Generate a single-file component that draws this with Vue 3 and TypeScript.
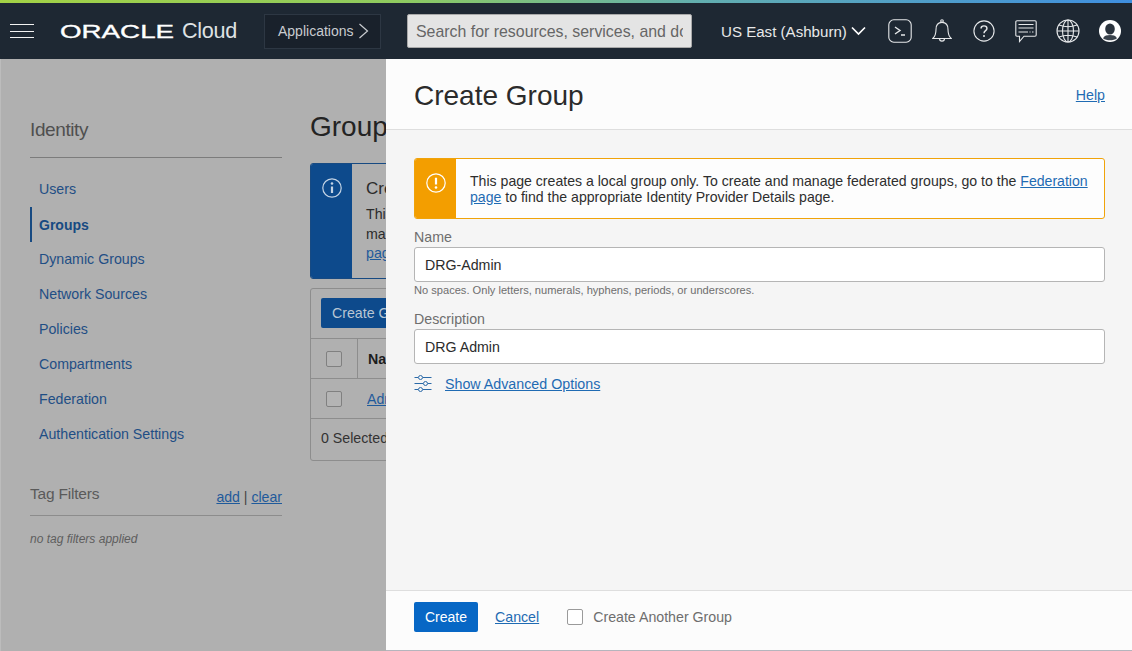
<script setup lang="ts">
const navItems: { label: string; active?: boolean }[] = [
  { label: 'Users' },
  { label: 'Groups', active: true },
  { label: 'Dynamic Groups' },
  { label: 'Network Sources' },
  { label: 'Policies' },
  { label: 'Compartments' },
  { label: 'Federation' },
  { label: 'Authentication Settings' }
]
</script>

<template>
  <div class="page">
    <div class="gradient"></div>
    <header class="topbar">
      <button class="burger" aria-label="Menu"><i></i><i></i><i></i></button>
      <div class="brand"><span class="oracle">ORACLE</span><span class="cloud">Cloud</span></div>
      <button class="apps">Applications
        <svg width="11" height="16" viewBox="0 0 11 16"><path d="M1.5 1 L9.5 8 L1.5 15" fill="none" stroke="#c9ccd0" stroke-width="1.2"/></svg>
      </button>
      <div class="search"><span>Search for resources, services, and do</span></div>
      <div class="region">US East (Ashburn)
        <svg width="15" height="10" viewBox="0 0 15 10"><path d="M1 1.5 L7.5 8 L14 1.5" fill="none" stroke="#fff" stroke-width="1.7"/></svg>
      </div>
      <div class="icons">
        <svg width="24" height="24" viewBox="0 0 24 24" fill="none" stroke="#e6e8ea" stroke-width="1.1"><rect x="0.8" y="0.8" width="22.4" height="22.4" rx="5"/><path d="M7 8 L12 11.5 L7 15 M13 16 H17" stroke-width="1.4"/></svg>
        <svg class="bell" width="20" height="24" viewBox="0 0 20 24" fill="none" stroke="#e6e8ea" stroke-width="1.1"><path d="M0.8 19.5 C3.5 17 4 14 4 10.5 C4 6 6.5 3.4 10 3.4 C13.5 3.4 16 6 16 10.5 C16 14 16.5 17 19.2 19.5 Z"/><circle cx="10" cy="2" r="1.3"/><path d="M7.5 19.5 C7.5 23 12.5 23 12.5 19.5"/></svg>
        <svg class="help" width="22" height="22" viewBox="0 0 24 24" fill="none" stroke="#e6e8ea" stroke-width="1.2"><circle cx="12" cy="12" r="11"/><path d="M8.8 9.2 C8.8 5.5 15.2 5.5 15.2 9.2 C15.2 11.8 12 11.5 12 14.5" stroke-width="1.6"/><circle cx="12" cy="17.5" r="1.1" fill="#e6e8ea" stroke="none"/></svg>
        <svg class="chat" width="22" height="23" viewBox="0 0 22 23" fill="none" stroke="#e6e8ea" stroke-width="1.1"><path d="M2 0.8 H20 Q21.2 0.8 21.2 2 V15 Q21.2 16.2 20 16.2 H9 L4.5 21.5 V16.2 H2 Q0.8 16.2 0.8 15 V2 Q0.8 0.8 2 0.8 Z"/><path d="M3.5 4.5 H18.5 M3.5 8 H18.5 M3.5 12 H13 M14.5 12 H15.5 M17 12 H18.5"/></svg>
        <svg class="globe" width="24" height="24" viewBox="0 0 24 24" fill="none" stroke="#e6e8ea" stroke-width="1.1"><circle cx="12" cy="12" r="11"/><ellipse cx="12" cy="12" rx="5.5" ry="11"/><path d="M12 1 V23 M1 12 H23 M3 6 Q12 9.5 21 6 M3 18 Q12 14.5 21 18"/></svg>
        <svg class="avatar" width="22" height="22" viewBox="0 0 22 22"><circle cx="11" cy="11" r="11" fill="#fff"/><ellipse cx="11" cy="9" rx="4.8" ry="5.6" fill="#2a333d"/><path d="M4 18.2 C5.5 15.6 8 15 11 15 C14 15 16.5 15.6 18 18.2 C14.5 21 7.5 21 4 18.2 Z" fill="#3a434c"/></svg>
      </div>
    </header>

    <div class="stage">
      <aside class="side">
        <h2 class="side-title">Identity</h2>
        <nav class="nav">
          <a v-for="item in navItems" :key="item.label" class="nav-item" :class="{ active: item.active }">{{ item.label }}</a>
        </nav>
        <div class="tag-head">
          <span class="tag-title">Tag Filters</span>
          <span class="tag-links"><a>add</a> | <a>clear</a></span>
        </div>
        <p class="tag-none">no tag filters applied</p>
      </aside>

      <main class="main">
        <h1 class="main-title">Groups</h1>
        <div class="info">
          <div class="info-icon">
            <svg width="20" height="20" viewBox="0 0 20 20" fill="none" stroke="#c3d3e4" stroke-width="1.2"><circle cx="10" cy="10" r="9.2"/><path d="M10 8.5 V15" stroke-width="2.2"/><circle cx="10" cy="5.5" r="1.3" fill="#c3d3e4" stroke="none"/></svg>
          </div>
          <div class="info-text">
            <div class="info-head">Create</div>
            <div>This</div>
            <div>manage</div>
            <a>page</a>
          </div>
        </div>
        <div class="table">
          <div class="tbar"><span class="tbtn">Create Group</span></div>
          <div class="trow thead">
            <span class="cell-check"><i class="check"></i></span>
            <span class="cell-name">Name</span>
          </div>
          <div class="trow">
            <span class="cell-check plain"><i class="check"></i></span>
            <a class="cell-link">Administrators</a>
          </div>
          <div class="tfoot">0 Selected</div>
        </div>
      </main>

      <section class="drawer">
        <div class="d-head">
          <h2>Create Group</h2>
          <a class="link">Help</a>
        </div>
        <div class="d-body">
          <div class="warn">
            <div class="warn-icon">
              <svg width="20" height="20" viewBox="0 0 20 20" fill="none" stroke="#fff" stroke-width="1.2"><circle cx="10" cy="10" r="9.2"/><path d="M10 4.8 V11.5" stroke-width="2.2"/><circle cx="10" cy="14.5" r="1.3" fill="#fff" stroke="none"/></svg>
            </div>
            <p>This page creates a local group only. To create and manage federated groups, go to the <a class="link">Federation</a> <a class="link">page</a> to find the appropriate Identity Provider Details page.</p>
          </div>
          <label class="f-label">Name</label>
          <div class="input">DRG-Admin</div>
          <div class="hint">No spaces. Only letters, numerals, hyphens, periods, or underscores.</div>
          <label class="f-label second">Description</label>
          <div class="input">DRG Admin</div>
          <div class="advanced">
            <svg width="18" height="17" viewBox="0 0 18 17" fill="none" stroke="#2c6aa8" stroke-width="1"><path d="M0.5 2.5 H4 M9 2.5 H17.5 M0.5 8.5 H9 M14 8.5 H17.5 M0.5 14.5 H4 M9 14.5 H17.5"/><circle cx="6.5" cy="2.5" r="2"/><circle cx="11.5" cy="8.5" r="2"/><circle cx="6.5" cy="14.5" r="2"/></svg>
            <a class="link">Show Advanced Options</a>
          </div>
        </div>
        <div class="d-foot">
          <button class="create">Create</button>
          <a class="link">Cancel</a>
          <i class="check light"></i>
          <span class="another">Create Another Group</span>
        </div>
      </section>
    </div>
  </div>
</template>

<style>
html, body { margin: 0; padding: 0; }
</style>

<style scoped>
.page {
  width: 1132px; height: 651px; overflow: hidden; display: flex; flex-direction: column;
  font-family: "Liberation Sans", Arial, sans-serif; font-size: 14.2px; color: #2b2b2b; background: #b0b0b0;
}
a { cursor: pointer; }
.gradient { height: 3px; flex: none; background: linear-gradient(90deg, #a3d246 0%, #8fcb5f 35%, #62aeb0 62%, #3f8fe0 100%); }
.topbar { height: 56px; flex: none; background: #1e2833; display: flex; align-items: center; color: #fff; }
.burger { width: 24px; margin-left: 10px; padding: 0; height: 14px; border: 0; background: none; display: flex; flex-direction: column; justify-content: space-between; }
.burger i { display: block; height: 1px; background: #f2f2f2; }
.brand { margin-left: 26px; display: flex; align-items: baseline; width: 178px; }
.oracle { font-size: 19px; font-weight: 400; display: inline-block; transform: scaleX(1.46); transform-origin: left center; width: 122px; -webkit-text-stroke: 0.35px #fff; }
.cloud { font-size: 21.6px; color: #dfe2e4; letter-spacing: -0.3px; }
.apps { margin-left: 26px; width: 117px; height: 35px; box-sizing: border-box; background: #19212b; border: 1px solid #2d3743; display: flex; align-items: center; gap: 4px; color: #c9ccd0; font: 14px "Liberation Sans", Arial, sans-serif; padding: 0 0 0 13px; }
.search { margin-left: 26px; width: 285px; height: 34px; box-sizing: border-box; background: #e4e4e4; border: 1px solid #a9a9a9; border-radius: 2px; padding: 1px 8px 0; display: flex; align-items: center; overflow: hidden; color: #666; white-space: nowrap; font-size: 15.9px; }
.search span { display: block; width: 272px; overflow: hidden; }
.region { margin-left: 29px; font-size: 15.1px; color: #e8e9ea; display: flex; align-items: center; gap: 4px; white-space: nowrap; }
.icons { margin-left: 22px; display: flex; align-items: center; gap: 20px; }
.icons svg { flex: none; }
.icons .help { margin-left: 1px; }
.icons .globe, .icons .avatar { margin-left: -1px; }

.stage { position: relative; flex: 1; display: flex; min-height: 0; overflow: hidden; border-left: 1px solid #bcbcbc; box-sizing: border-box; }
.side { width: 252px; margin-left: 29px; flex: none; }
.side-title { margin: 0; padding: 59px 0 15px; height: 24px; font-size: 19px; line-height: 24px; font-weight: 400; color: #4f4f4f; letter-spacing: -0.4px; border-bottom: 1px solid #7c7c7c; box-sizing: content-box; }
.nav { display: flex; flex-direction: column; padding-top: 14px; }
.nav-item { height: 35px; line-height: 35px; padding-left: 9px; color: #1f4e85; font-size: 14.2px; }
.nav-item.active { font-weight: 700; color: #174a82; border-left: 2px solid #174a82; padding-left: 7px; line-height: 37px; font-size: 14px; }
.tag-head { display: flex; justify-content: space-between; align-items: flex-end; margin-top: 31px; padding-bottom: 10px; border-bottom: 1px solid #8c8c8c; }
.tag-title { font-size: 15.5px; color: #5a5a5a; letter-spacing: -0.2px; line-height: 22px; }
.tag-links { color: #444; font-size: 14.1px; }
.tag-links a { color: #1f5a9b; text-decoration: underline; }
.tag-none { margin: 16px 0 0; font-size: 12px; font-style: italic; color: #5e5e5e; }

.main { margin-left: 28px; flex: none; width: 76px; overflow: hidden; }
.main-title { margin: 51px 0 0; font-size: 28px; line-height: 34px; font-weight: 400; color: #232323; }
.info { margin-top: 19px; width: 300px; height: 116px; display: flex; border-radius: 3px; border: 1px solid #174a82; box-sizing: border-box; overflow: hidden; }
.info-icon { width: 41px; background: #0d4a8c; flex: none; display: flex; justify-content: center; padding-top: 14px; box-sizing: border-box; }
.info-text { padding: 15px 14px; font-size: 14.2px; line-height: 19.5px; color: #2b2b2b; }
.info-text div { white-space: nowrap; }
.info-head { font-size: 17px; line-height: 20px; margin-bottom: 6px; }
.info-text a { color: #1f5a9b; text-decoration: underline; }
.table { margin-top: 9px; width: 300px; height: 173px; box-sizing: border-box; border: 1px solid #8d8d8d; border-radius: 3px; display: flex; flex-direction: column; }
.tbar { height: 50px; flex: none; padding: 9px 10px 0; box-sizing: border-box; border-bottom: 1px solid #8d8d8d; }
.tbtn { display: inline-block; width: 110px; height: 30px; line-height: 30px; padding-left: 11px; box-sizing: border-box; background: #0d4a8c; color: #b9c6d4; border-radius: 2px; }
.trow { height: 40px; flex: none; display: flex; align-items: center; border-bottom: 1px solid #8d8d8d; box-sizing: border-box; }
.cell-check { width: 47px; height: 100%; display: flex; align-items: center; justify-content: center; box-sizing: border-box; border-right: 1px solid #8d8d8d; }
.cell-check.plain { border-right-color: transparent; }
.cell-name { margin-left: 10px; font-weight: 700; color: #1c1c1c; }
.cell-link { margin-left: 9px; color: #1f5a9b; text-decoration: underline; }
.tfoot { padding: 11px 10px; color: #333; white-space: nowrap; }
.check { display: block; width: 14px; height: 14px; border: 1px solid #808080; border-radius: 2px; background: #b4b4b4; flex: none; }
.check.light { background: #fff; border-color: #9a9a9a; }

.drawer { position: absolute; left: 385px; top: 0; right: 0; bottom: 0; display: flex; flex-direction: column; background: #f5f5f5; border-bottom: 1px solid #b5b5bd; box-sizing: border-box; }
.d-head { height: 71px; flex: none; box-sizing: border-box; background: #fcfcfc; border-bottom: 1px solid #dedede; padding: 0 27px 0 28px; display: flex; justify-content: space-between; align-items: flex-start; }
.d-head h2 { margin: 20px 0 0; font-size: 28px; line-height: 34px; font-weight: 400; color: #2b2b2b; }
.d-head .link { margin-top: 28px; }
.link { color: #1f6bb3; text-decoration: underline; }
.d-body { flex: 1; padding: 28px 27px 0 28px; }
.warn { height: 61px; box-sizing: border-box; display: flex; background: #fdfdfd; border: 1px solid #f0a30a; border-radius: 3px; overflow: hidden; }
.warn-icon { width: 41px; flex: none; background: #f39e00; display: flex; justify-content: center; padding-top: 14px; box-sizing: border-box; }
.warn p { margin: 0; padding: 14px 14px 0; line-height: 16px; color: #2e2e2e; font-size: 14.1px; }
.f-label { display: block; margin-top: 10px; line-height: 17px; font-size: 14.2px; color: #6e6e6e; }
.f-label.second { margin-top: 14px; }
.input { margin-top: 1px; height: 35px; box-sizing: border-box; background: #fff; border: 1px solid #b5b5b5; border-radius: 3px; padding: 0 10px; line-height: 35px; color: #2b2b2b; }
.hint { margin-top: 1px; font-size: 11.1px; line-height: 14px; color: #6e6e6e; }
.advanced { margin-top: 11px; display: flex; align-items: center; gap: 13px; font-size: 14.25px; }
.d-foot { height: 60px; flex: none; box-sizing: border-box; background: #fcfcfc; border-top: 1px solid #dedede; padding: 0 0 8px 28px; display: flex; align-items: center; }
.create { width: 64px; height: 30px; padding: 0; border: 0; border-radius: 2px; background: #0767c5; color: #fff; font: 14px "Liberation Sans", Arial, sans-serif; }
.d-foot .link { margin-left: 17px; }
.d-foot .check { margin-left: 28px; }
.another { margin-left: 10px; color: #6e6e6e; }
</style>
